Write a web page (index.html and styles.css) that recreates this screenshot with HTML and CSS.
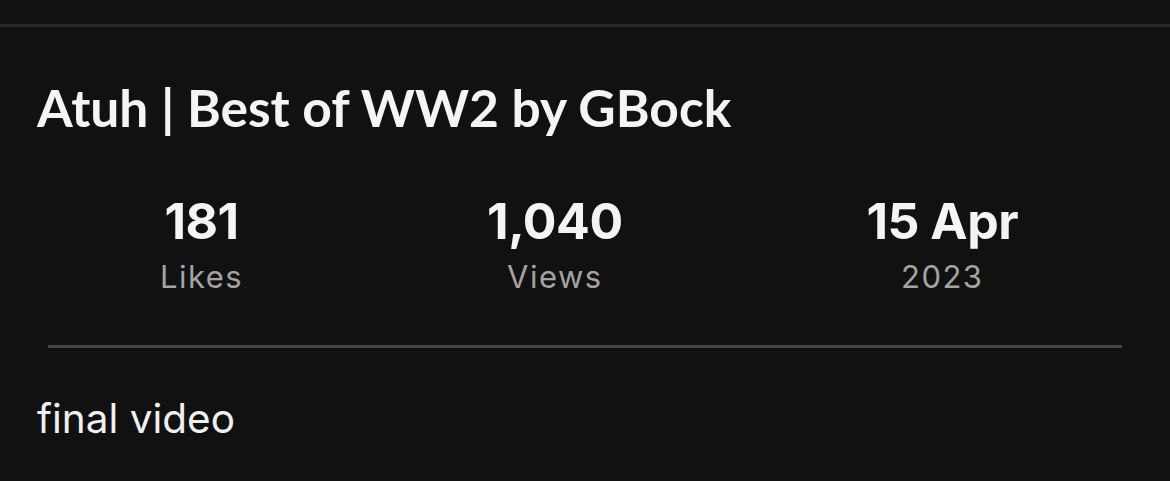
FILE: index.html
```html
<!DOCTYPE html>
<html>
<head>
<meta charset="utf-8">
<link rel="stylesheet" href="styles.css">
</head>
<body>
<div class="page">
  <div class="topline"></div>
  <h1 class="title">Atuh | Best of WW2 by GBock</h1>
  <div class="stats">
    <div class="stat"><div class="num">181</div><div class="lbl">Likes</div></div>
    <div class="stat"><div class="num">1,040</div><div class="lbl">Views</div></div>
    <div class="stat"><div class="num">15 Apr</div><div class="lbl">2023</div></div>
  </div>
  <div class="divider"></div>
  <p class="desc">final video</p>
</div>
</body>
</html>
```
FILE: styles.css
```css
html, body {
  margin: 0;
  padding: 0;
  background: #111111;
  height: 100%;
}
.page {
  display: flex;
  flex-direction: column;
  padding-top: 24px;
  font-family: Inter, "Noto Sans", sans-serif;
  color: #f2f2f2;
}
.topline {
  height: 3px;
  background: #2b2b2b;
}
.title {
  margin: 51px 0 0 37px;
  font-family: Lato, sans-serif;
  font-weight: 700;
  font-size: 51.5px;
  line-height: 58px;
  color: #f4f4f4;
}
.stats {
  display: flex;
  justify-content: space-around;
  padding: 0 30px 0 38px;
  margin-top: 57px;
}
.stat {
  display: flex;
  flex-direction: column;
  align-items: center;
}
.num {
  font-weight: 700;
  font-size: 50px;
  line-height: 56px;
  margin-bottom: 9px;
  color: #f4f4f4;
  letter-spacing: -0.5px;
}
.lbl {
  font-weight: 400;
  font-size: 31px;
  line-height: 38px;
  letter-spacing: 1.5px;
  color: #a3a3a3;
}
.divider {
  height: 3px;
  background: #444444;
  margin: 49px 48px 0 48px;
}
.desc {
  margin: 47px 0 0 37px;
  font-size: 40.5px;
  line-height: 48px;
  color: #f0f0f0;
}
```
